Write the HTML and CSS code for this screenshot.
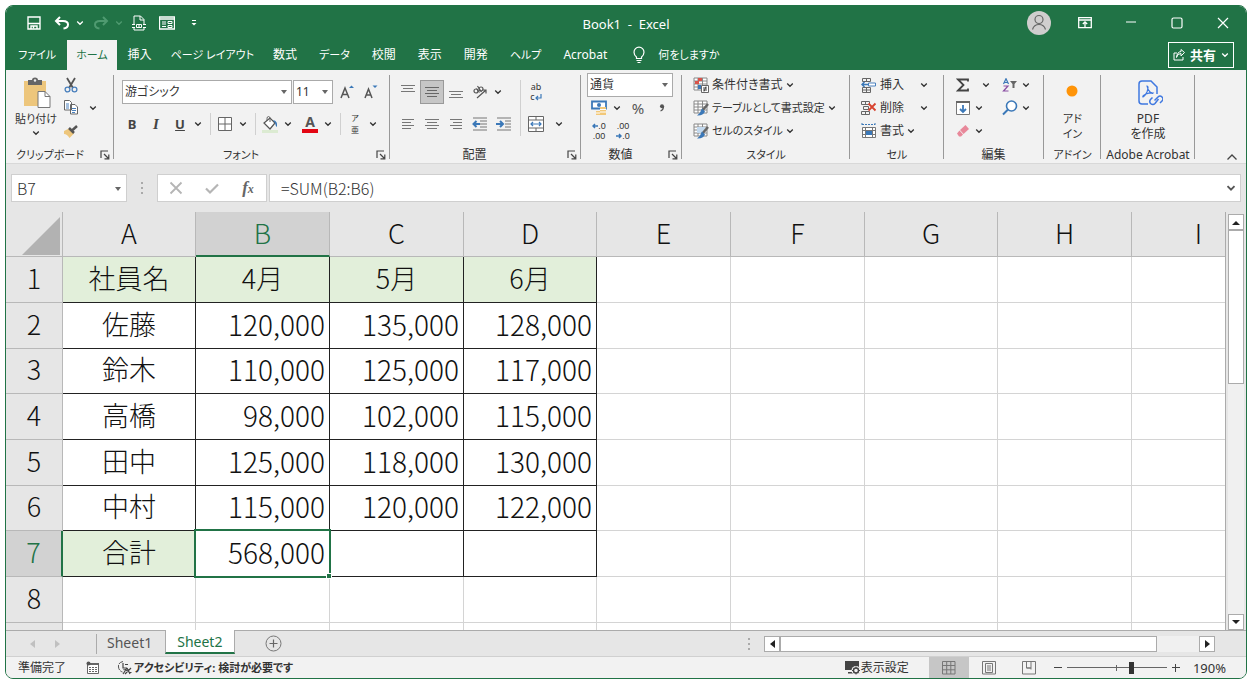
FILE: index.html
```html
<!DOCTYPE html>
<html lang="ja">
<head>
    <meta charset="UTF-8">
    <meta name="viewport" content="width=device-width, initial-scale=1.0">
    <title>Book1 - Excel</title>
    <link rel="stylesheet" href="styles.css">
</head>
<body>
    <!-- 共通アイコン -->
    <svg class="defs" width="0" height="0" aria-hidden="true">
        <symbol id="chev" viewBox="0 0 8 8"><path d="M1.2 2.5 4 5.3 6.8 2.5" fill="none" stroke="currentColor" stroke-width="1.3"/></symbol>
        <symbol id="launch" viewBox="0 0 10 10"><path d="M1 8V1h7M4 4l4 4M8.8 4.5V8.800H4.500" fill="none" stroke="#444" stroke-width="1.2"/></symbol>
        <symbol id="table" viewBox="0 0 16 16"><path d="M1 1h13v12H1zM1 4h13M1 7h13M1 10h13M5 1v12M9.500 1v12" fill="#fff" stroke="#888"/></symbol>
        <symbol id="pen" viewBox="0 0 16 16"><path d="M15 4 9 11" stroke="#666" stroke-width="2.500"/><path d="M9 8.500 12 11.500Q10 16 4 15.500 7.500 13 9 8.500z" fill="#3b78b8"/></symbol>
    </svg>

    <div class="window">
        <header class="titlebar">
            <div class="quick">
                <button class="icon-btn" aria-label="上書き保存"><svg width="14" height="14" viewBox="0 0 14 14"><path d="M1 1h12v12H1z" fill="none" stroke="#fff" stroke-width="1.4"/><path d="M1 7.500h12M4 13V10h6v3M6.500 10.500v2" fill="none" stroke="#fff" stroke-width="1.4"/></svg></button>
                <button class="icon-btn undo" aria-label="元に戻す"><svg width="16" height="14" viewBox="0 0 16 14"><path d="M6 1 2 5l4 4M2 5h7q5 0 5 3.500T9.500 12.500" fill="none" stroke="#fff" stroke-width="2"/></svg></button>
                <button class="chev-btn" aria-label="元に戻す一覧"><svg width="8" height="8"><use href="#chev"/></svg></button>
                <button class="icon-btn redo" aria-label="やり直し"><svg width="16" height="14" viewBox="0 0 16 14"><path d="M10 1l4 4-4 4M14 5H7q-5 0-5 3.500t4.500 4" fill="none" stroke="#4f9a70" stroke-width="2"/></svg></button>
                <button class="chev-btn dim" aria-label="やり直し一覧"><svg width="8" height="8"><use href="#chev"/></svg></button>
                <button class="icon-btn print" aria-label="印刷プレビュー"><svg width="14" height="16" viewBox="0 0 14 16"><path d="M2 9V1h6.500L12 4.500V9M8 1v4h4M2 13v2h10v-2" fill="none" stroke="#fff"/><path d="M0 9.500h3M11 9.500h3M0 12.500h3M11 12.500h3" stroke="#fff"/><path d="M4.500 9.500h5v3h-5zM7 9.500v3" fill="none" stroke="#fff"/></svg></button>
                <button class="icon-btn form" aria-label="フォーム"><svg width="16" height="14" viewBox="0 0 16 14"><path d="M.5 1h15v12H.5zM.5 3h15" fill="none" stroke="#fff" stroke-width="1.3"/><path d="M3 6h4M3 8h4M3 10.500h4" stroke="#fff"/><path d="M9 5.500h4v2H9zM9 9.500h4v2H9z" fill="none" stroke="#fff"/></svg></button>
                <button class="chev-btn qat" aria-label="クイックアクセスのカスタマイズ"><svg width="8" height="8" viewBox="0 0 8 8"><path d="M2 1.500h4" stroke="#fff"/><path d="M1.500 4h5L4 6.500z" fill="#fff"/></svg></button>
            </div>
            <div class="title">Book1&nbsp; -&nbsp; Excel</div>
            <div class="controls">
                <button class="avatar" aria-label="アカウント"><svg width="24" height="24" viewBox="0 0 24 24"><circle cx="12" cy="12" r="12" fill="#d0cece"/><circle cx="12" cy="8.500" r="4" fill="none" stroke="#666" stroke-width="1.200"/><path d="M5.500 18.500Q7 13.500 12 13.500t6.500 5" fill="none" stroke="#666" stroke-width="1.200"/></svg></button>
                <button aria-label="リボンの表示オプション"><svg width="14" height="12" viewBox="0 0 14 12"><path d="M.7.700h12.600v10H.7zM.7 3h12.600M7 10V5M4.800 7 7 4.800 9.200 7" fill="none" stroke="#fff" stroke-width="1.300"/></svg></button>
                <button aria-label="最小化"><svg width="12" height="12" viewBox="0 0 12 12"><path d="M1 5h10" stroke="#fff" stroke-width="1.200"/></svg></button>
                <button aria-label="最大化"><svg width="12" height="12" viewBox="0 0 12 12"><rect x="1" y="1" width="10" height="10" rx="1.500" fill="none" stroke="#fff" stroke-width="1.200"/></svg></button>
                <button aria-label="閉じる"><svg width="12" height="12" viewBox="0 0 12 12"><path d="m1 1 10 10M11 1 1 11" stroke="#fff" stroke-width="1.200"/></svg></button>
            </div>
        </header>

        <nav class="tabs">
            <button class="tab kana">ファイル</button>
            <button class="tab kana active">ホーム</button>
            <button class="tab">挿入</button>
            <button class="tab kana long">ページ レイアウト</button>
            <button class="tab">数式</button>
            <button class="tab kana">データ</button>
            <button class="tab">校閲</button>
            <button class="tab">表示</button>
            <button class="tab">開発</button>
            <button class="tab kana">ヘルプ</button>
            <button class="tab">Acrobat</button>
            <button class="tab tell kana"><svg width="14" height="18" viewBox="0 0 14 18"><path d="M4.500 12.500V11Q2 9 2 6.200a5 5 0 0 1 10 0Q12 9 9.500 11v1.500zM4.500 14.500h5M5.500 16.500h3" fill="none" stroke="#fff" stroke-width="1.200"/></svg>何をしますか</button>
            <button class="share"><svg width="12" height="12" viewBox="0 0 12 12"><path d="M4 4H1v7h9V8M3.500 8.500Q4 4.500 8 4.500V7l3.500-3.500L8 .500v2q-4 .5-4.500 6z" fill="none" stroke="#fff"/></svg>共有<svg width="8" height="8"><use href="#chev"/></svg></button>
        </nav>

        <div class="ribbon">
            <section class="group g-clip">
                <div class="body">
                    <button class="big paste kana">
                        <svg width="30" height="34" viewBox="0 0 30 34"><path d="M3 4h22v25H3z" fill="#edc67c"/><path d="M7 8V3h4q0-2.500 3-2.500T17 3h4v5z" fill="#666"/><circle cx="14" cy="3.500" r="1.200" fill="#eee"/><path d="M17 14.500h7l5 5V30.500H17z" fill="#fff" stroke="#777"/><path d="M24 14.500v5h5" fill="none" stroke="#777"/></svg>
                        <span>貼り付け</span>
                        <svg width="8" height="8"><use href="#chev"/></svg>
                    </button>
                    <div class="stack">
                        <div class="row"><button class="icon-btn" aria-label="切り取り"><svg width="14" height="16" viewBox="0 0 14 16"><path d="M3 1l6 10M11 1 5 11" stroke="#555" stroke-width="1.800"/><circle cx="3.500" cy="12.500" r="2.400" fill="none" stroke="#4a80bd" stroke-width="1.300"/><circle cx="10.500" cy="12.500" r="2.400" fill="none" stroke="#4a80bd" stroke-width="1.300"/></svg></button></div>
                        <div class="row"><button class="icon-btn" aria-label="コピー"><svg width="14" height="15" viewBox="0 0 14 15"><path d="M.5.500h5l2 2V10h-7zM6.500 4.500h4.500l2.500 2.500v7h-7z" fill="#fff" stroke="#666"/><path d="M2 4h3M2 6h3M2 8h3M8 8.500h4M8 10.500h4M8 12.500h3" stroke="#4a80bd"/></svg></button><button class="chev-btn copy-more" aria-label="コピーのオプション"><svg width="8" height="8"><use href="#chev"/></svg></button></div>
                        <div class="row"><button class="icon-btn" aria-label="書式のコピー"><svg width="14" height="14" viewBox="0 0 14 14"><path d="m0 7 5-2.500 5 5-4.500 4.500Q3 10 0 10z" fill="#edc67c"/><path d="m5 4 5 5M8 6.500 13 2" stroke="#555" stroke-width="2.500"/></svg></button></div>
                    </div>
                </div>
                <footer><span class="kana">クリップボード</span><button class="launcher" aria-label="クリップボードの設定"><svg width="10" height="10"><use href="#launch"/></svg></button></footer>
            </section>

            <section class="group g-font">
                <div class="body two">
                    <div class="row fields">
                        <span class="drop font-name"><select aria-label="フォント"><option>游ゴシック</option></select></span>
                        <span class="drop font-size"><select aria-label="フォント サイズ"><option>11</option></select></span>
                        <button class="icon-btn grow" aria-label="拡大"><svg width="14" height="14" viewBox="0 0 14 14"><path d="m1 13 4-10 4 10M2.500 9.500h5" fill="none" stroke="#555" stroke-width="1.500"/><path d="m9 3 2.500-2.500L14 3z" fill="#3b78b8"/></svg></button>
                        <button class="icon-btn" aria-label="縮小"><svg width="14" height="14" viewBox="0 0 14 14"><path d="m1 13 3.500-9L8 13M2.500 10h4" fill="none" stroke="#555" stroke-width="1.500"/><path d="M8.500.500 11 3l2.500-2.500z" fill="#3b78b8"/></svg></button>
                    </div>
                    <div class="row">
                        <button class="icon-btn letter"><b>B</b></button>
                        <button class="icon-btn letter italic"><i>I</i></button>
                        <button class="icon-btn letter"><u>U</u></button>
                        <button class="chev-btn" aria-label="下線の種類"><svg width="8" height="8"><use href="#chev"/></svg></button>
                        <i class="sep"></i>
                        <button class="icon-btn" aria-label="罫線"><svg width="14" height="14" viewBox="0 0 14 14"><path d="M.5.500h13v13H.5zM7 .500v13M.5 7h13" fill="#fff" stroke="#666"/></svg></button>
                        <button class="chev-btn" aria-label="罫線の種類"><svg width="8" height="8"><use href="#chev"/></svg></button>
                        <i class="sep"></i>
                        <button class="icon-btn" aria-label="塗りつぶし"><svg width="16" height="17" viewBox="0 0 16 17"><path d="m2 7 6-5 5 5-5 6z" fill="#fff" stroke="#555" stroke-width="1.200"/><path d="M5 5V2.500q0-2 1.500-2t1.500 2V6" fill="none" stroke="#666"/><path d="M11 4q5 1 4 7-1.500-1-2-4z" fill="#3b78b8"/><path d="M0 14h16v3H0z" fill="#dcebd2"/></svg></button>
                        <button class="chev-btn" aria-label="塗りつぶしの色"><svg width="8" height="8"><use href="#chev"/></svg></button>
                        <button class="icon-btn font-color" aria-label="フォントの色">A</button>
                        <button class="chev-btn" aria-label="フォントの色の選択"><svg width="8" height="8"><use href="#chev"/></svg></button>
                        <i class="sep"></i>
                        <button class="icon-btn ruby" aria-label="ふりがな"><span>ア</span><span>亜</span></button>
                        <button class="chev-btn" aria-label="ふりがなの設定"><svg width="8" height="8"><use href="#chev"/></svg></button>
                    </div>
                </div>
                <footer class="wide"><span class="kana">フォント</span><button class="launcher" aria-label="フォントの設定"><svg width="10" height="10"><use href="#launch"/></svg></button></footer>
            </section>

            <section class="group g-align">
                <div class="body">
                    <div class="two">
                        <div class="row">
                            <button class="icon-btn" aria-label="上揃え"><svg width="14" height="14" viewBox="0 0 14 14"><path d="M0 .500h14M2 3.500h10M0 6.500h14" stroke="#777"/></svg></button>
                            <button class="icon-btn pressed" aria-label="上下中央揃え"><svg width="14" height="14" viewBox="0 0 14 14"><path d="M0 2.500h14M2 5.500h10M0 8.500h14M2 11.500h10" stroke="#666"/></svg></button>
                            <button class="icon-btn" aria-label="下揃え"><svg width="14" height="14" viewBox="0 0 14 14"><path d="M0 6.500h14M2 9.500h10M0 12.500h14" stroke="#777"/></svg></button>
                            <button class="icon-btn" aria-label="方向"><svg width="16" height="16" viewBox="0 0 16 16"><g fill="none" stroke="#555" stroke-width="1.200"><circle cx="4" cy="7" r="2"/><path d="m4.500 4.500 3 4M5.500 2l4 6"/><circle cx="9" cy="5" r="2"/><path d="m5 14 9-8M10.500 6H14v3.500"/></g></svg></button>
                            <button class="chev-btn" aria-label="方向の選択"><svg width="8" height="8"><use href="#chev"/></svg></button>
                        </div>
                        <div class="row">
                            <button class="icon-btn" aria-label="左揃え"><svg width="12" height="12" viewBox="0 0 12 12"><path d="M0 1.500h12M0 4.500h9M0 7.500h12M0 10.500h9" stroke="#777"/></svg></button>
                            <button class="icon-btn" aria-label="中央揃え"><svg width="14" height="12" viewBox="0 0 14 12"><path d="M0 1.500h14M2 4.500h10M0 7.500h14M2 10.500h10" stroke="#777"/></svg></button>
                            <button class="icon-btn" aria-label="右揃え"><svg width="12" height="12" viewBox="0 0 12 12"><path d="M0 1.500h12M3 4.500h9M0 7.500h12M3 10.500h9" stroke="#777"/></svg></button>
                            <button class="icon-btn" aria-label="インデントを減らす"><svg width="16" height="14" viewBox="0 0 16 14"><path d="M1 1h14M8 4h7M8 7h7M8 10h7M1 13h14" stroke="#777"/><path d="M8 7H2M4.500 4 1.500 7l3 3" fill="none" stroke="#3b78b8" stroke-width="2"/></svg></button>
                            <button class="icon-btn" aria-label="インデントを増やす"><svg width="16" height="14" viewBox="0 0 16 14"><path d="M1 1h14M9 4h6M9 7h6M9 10h6M1 13h14" stroke="#777"/><path d="M0 7h6M4 4l3 3-3 3" fill="none" stroke="#3b78b8" stroke-width="2"/></svg></button>
                        </div>
                    </div>
                    <i class="sep tall"></i>
                    <div class="two">
                        <div class="row"><button class="icon-btn wrap-text" aria-label="折り返して全体を表示する"><span>ab</span><span>c<svg width="7" height="7" viewBox="0 0 7 7"><path d="M6 0v4H1M3 2 1 4l2 2" fill="none" stroke="#3b78b8" stroke-width="1.200"/></svg></span></button></div>
                        <div class="row"><button class="icon-btn" aria-label="セルを結合して中央揃え"><svg width="16" height="16" viewBox="0 0 16 16"><path d="M.5.500h15v15H.5zM.5 4h15M.5 12h15M8 .500V4M8 12v3.500" fill="#fff" stroke="#666"/><path d="M3 8h10M5 6 3 8l2 2M11 6l2 2-2 2" fill="none" stroke="#3b78b8" stroke-width="1.200"/></svg></button><button class="chev-btn merge-more" aria-label="結合の種類"><svg width="8" height="8"><use href="#chev"/></svg></button></div>
                    </div>
                </div>
                <footer class="wide"><span>配置</span><button class="launcher" aria-label="配置の設定"><svg width="10" height="10"><use href="#launch"/></svg></button></footer>
            </section>

            <section class="group g-number">
                <div class="body stack">
                    <div class="row"><span class="drop number-format"><select aria-label="表示形式"><option>通貨</option></select></span></div>
                    <div class="row">
                        <button class="icon-btn" aria-label="通貨表示形式"><svg width="16" height="16" viewBox="0 0 16 16"><path d="M1 1.500h14v7H1z" fill="#fff" stroke="#3b78b8" stroke-width="1.800"/><circle cx="8" cy="5" r="2" fill="#3b78b8"/><path d="M9 7h6v8H9zM5 11h5v4H5z" fill="#f2c879"/><path d="M9 9.500h6M9 12h6M5 13h4" stroke="#fff"/></svg></button>
                        <button class="chev-btn" aria-label="通貨の選択"><svg width="8" height="8"><use href="#chev"/></svg></button>
                        <button class="icon-btn percent">%</button>
                        <button class="icon-btn comma" aria-label="桁区切り"><svg width="6" height="8" viewBox="0 0 6 8"><circle cx="3" cy="2.300" r="2" fill="#555"/><path d="M4.500 2q0 4-3 5" fill="none" stroke="#555" stroke-width="1.300"/></svg></button>
                    </div>
                    <div class="row">
                        <button class="icon-btn decimals" aria-label="小数点以下の桁数を増やす"><span><svg width="6" height="6" viewBox="0 0 6 6"><path d="M6 3H1M3 1 1 3l2 2" fill="none" stroke="#3b78b8" stroke-width="1.500"/></svg>.0</span><span>.00</span></button>
                        <button class="icon-btn decimals" aria-label="小数点以下の桁数を減らす"><span>.00</span><span><svg width="6" height="6" viewBox="0 0 6 6"><path d="M0 3h5M3 1l2 2-2 2" fill="none" stroke="#3b78b8" stroke-width="1.500"/></svg>.0</span></button>
                    </div>
                </div>
                <footer class="wide"><span>数値</span><button class="launcher" aria-label="数値の設定"><svg width="10" height="10"><use href="#launch"/></svg></button></footer>
            </section>

            <section class="group g-style">
                <div class="body stack">
                    <button class="row cmd"><svg width="16" height="16"><use href="#table"/><path d="M5 1h4v3H5zM2 4h4v3H2z" fill="#d9534a"/><path d="M5 8h3v4H5z" fill="#3b78b8"/><path d="M8.500 8.500h7v7h-7z" fill="#fff" stroke="#666"/><path d="M10 11h4M10 13h4M13 9.500l-2 5" stroke="#444"/></svg><span>条件付き書式</span><svg width="8" height="8"><use href="#chev"/></svg></button>
                    <button class="row cmd kana"><svg width="16" height="16"><use href="#table"/><use href="#pen"/></svg><span>テーブルとして書式設定</span><svg width="8" height="8"><use href="#chev"/></svg></button>
                    <button class="row cmd kana"><svg width="16" height="16"><use href="#table"/><path d="M4 4h8v6H4z" fill="#c3d9ee"/><use href="#pen"/></svg><span>セルのスタイル</span><svg width="8" height="8"><use href="#chev"/></svg></button>
                </div>
                <footer><span class="kana">スタイル</span></footer>
            </section>

            <section class="group g-cells">
                <div class="body stack">
                    <button class="row cmd spread"><svg width="16" height="16" viewBox="0 0 16 16"><path d="M1.500 1.500h8v3h-8zM5.500 1.500v3M1.500 10.500h8v5h-8zM5.500 10.500v5M1.500 13h8" fill="none" stroke="#666"/><path d="M7.500 6h7v3h-7z" fill="#fff" stroke="#4a80bd"/><path d="M7 7.500H1M3.500 5 1 7.500 3.500 10" fill="none" stroke="#3b78b8" stroke-width="1.500"/></svg><span>挿入</span><svg width="8" height="8"><use href="#chev"/></svg></button>
                    <button class="row cmd spread"><svg width="16" height="16" viewBox="0 0 16 16"><path d="M.5 1.500h8v3h-8zM4.500 1.500v3M2.500 6.500h5v3h-5zM.5 11.500h8v3h-8zM4.500 11.500v3" fill="none" stroke="#666"/><path d="m7.500 3.500 7 7M14.500 3.500l-7 7" stroke="#d8432f" stroke-width="1.800"/></svg><span>削除</span><svg width="8" height="8"><use href="#chev"/></svg></button>
                    <button class="row cmd"><svg width="16" height="16" viewBox="0 0 16 16"><path d="M1 1.500h13M1 0v3M14 0v3" stroke="#3b78b8" stroke-dasharray="2 1"/><path d="M1.500 4.500h13v10h-13zM4.500 4.500v10M11.500 4.500v10M1.500 7.500h13M1.500 11.500h13" fill="#fff" stroke="#777"/><path d="M5 8h6v4H5z" fill="#3b78b8"/></svg><span>書式</span><svg width="8" height="8"><use href="#chev"/></svg></button>
                </div>
                <footer><span class="kana">セル</span></footer>
            </section>

            <section class="group g-edit">
                <div class="body">
                    <div class="stack">
                        <div class="row"><button class="icon-btn" aria-label="合計"><svg width="14" height="14" viewBox="0 0 14 14"><path d="M12 3.500V1.500H2L7.500 7 2 12.500h10v-2" fill="none" stroke="#444" stroke-width="1.800"/></svg></button><button class="chev-btn sum-more" aria-label="合計の種類"><svg width="8" height="8"><use href="#chev"/></svg></button></div>
                        <div class="row"><button class="icon-btn" aria-label="フィル"><svg width="14" height="14" viewBox="0 0 14 14"><path d="M.5.500h13v13H.5z" fill="#fff" stroke="#777"/><path d="M0 1h14" stroke="#666" stroke-width="2"/><path d="M7 4v7M4 8l3 3 3-3" fill="none" stroke="#3b78b8" stroke-width="1.800"/></svg></button><button class="chev-btn tight" aria-label="フィルの方向"><svg width="8" height="8"><use href="#chev"/></svg></button></div>
                        <div class="row"><button class="icon-btn" aria-label="クリア"><svg width="14" height="14" viewBox="0 0 14 14"><path d="m4 6 5.500-5L13 5 7.500 10z" fill="#e8889a"/><path d="M3.500 6.500 7 10.500 5 12.500H3L1 9.500z" fill="#e8889a"/></svg></button><button class="chev-btn tight" aria-label="クリアの種類"><svg width="8" height="8"><use href="#chev"/></svg></button></div>
                    </div>
                    <div class="stack">
                        <div class="row"><button class="icon-btn" aria-label="並べ替えとフィルター"><svg width="16" height="14" viewBox="0 0 16 14"><path d="M1.500 6 4 .700 6.500 6M2.500 4.500h3" fill="none" stroke="#3b78b8" stroke-width="1.200"/><path d="M1.500 8h4.500l-4.500 5H6.500" fill="none" stroke="#8a4fa3" stroke-width="1.200"/><path d="M8 3h7l-2.500 3v4h-2V6z" fill="#666"/></svg></button><button class="chev-btn tight" aria-label="並べ替えの種類"><svg width="8" height="8"><use href="#chev"/></svg></button></div>
                        <div class="row"><button class="icon-btn" aria-label="検索と選択"><svg width="16" height="16" viewBox="0 0 16 16"><circle cx="9.500" cy="6" r="5" fill="#fff" stroke="#3b78b8" stroke-width="1.600"/><path d="m6 9.500-5 5" stroke="#3b78b8" stroke-width="2"/></svg></button><button class="chev-btn tight" aria-label="検索の種類"><svg width="8" height="8"><use href="#chev"/></svg></button></div>
                    </div>
                </div>
                <footer class="edit"><span>編集</span></footer>
            </section>

            <section class="group g-addin">
                <div class="body"><button class="big"><svg width="30" height="34" viewBox="0 0 30 34"><circle cx="14" cy="14" r="5.500" fill="#ff9408"/></svg><span class="kana">アド</span><span class="kana">イン</span></button></div>
                <footer><span class="kana">アドイン</span></footer>
            </section>

            <section class="group g-acrobat">
                <div class="body"><button class="big"><svg width="30" height="34" viewBox="0 0 30 34"><g fill="none" stroke="#3f78e0" stroke-width="1.500"><path d="M15 27H9q-3 0-3-3V7q0-3 3-3h9l6 6v7"/><path d="M14 9q2 0 0 6-2 4-4 5-1-1 3-3 4-1.500 7-1-1 1-3-1-2.500-2.500-3-6z" stroke-width="1.200"/><path d="M21.500 23.500 25 20q2-2 4 0t0 4l-2 2M25.500 22 22 26.500q-2 2-4.500 0-1.500-2 0-4l2-2"/></g></svg><span>PDF</span><span>を作成</span></button></div>
                <footer><span>Adobe Acrobat</span></footer>
            </section>

            <button class="collapse" aria-label="リボンを折りたたむ"><svg width="12" height="8" viewBox="0 0 12 8"><path d="M1.500 6.500 6 2l4.500 4.500" fill="none" stroke="#444" stroke-width="1.300"/></svg></button>
        </div>

        <div class="formula-bar">
            <div class="name-box"><input type="text" value="B7" aria-label="名前ボックス"><span class="arrow"></span></div>
            <svg class="grip" width="4" height="14" viewBox="0 0 4 14"><path d="M1 1h2v2H1zM1 6h2v2H1zM1 11h2v2H1z" fill="#aaa"/></svg>
            <div class="fx-box">
                <button aria-label="キャンセル"><svg width="14" height="14" viewBox="0 0 14 14"><path d="m1.500 1.500 11 11M12.500 1.500l-11 11" stroke="#b5b5b5" stroke-width="1.800"/></svg></button>
                <button aria-label="入力"><svg width="14" height="14" viewBox="0 0 14 14"><path d="m1 7.500 4 4 8-8" fill="none" stroke="#b5b5b5" stroke-width="2.200"/></svg></button>
                <button class="fx" aria-label="関数の挿入"><i>f<small>x</small></i></button>
            </div>
            <div class="formula"><input type="text" value="=SUM(B2:B6)" aria-label="数式バー"><button aria-label="数式バーの展開"><svg width="10" height="10" viewBox="0 0 8 8"><path d="M1.200 2.500 4 5.300 6.800 2.500" fill="none" stroke="#555" stroke-width="1.500"/></svg></button></div>
        </div>

        <main class="workspace">
            <div class="sheet">
                <table>
                    <colgroup class="head-col"><col></colgroup>
                    <colgroup class="cell-cols"><col><col><col><col><col><col><col><col><col></colgroup>
                    <thead>
                        <tr><th class="corner"><svg width="38" height="38" viewBox="0 0 38 38"><path d="M38 0v38H0z" fill="#b2b2b2"/></svg></th><th>A</th><th class="sel">B</th><th>C</th><th>D</th><th>E</th><th>F</th><th>G</th><th>H</th><th>I</th></tr>
                    </thead>
                    <tbody>
                        <tr class="heading"><th>1</th><td>社員名</td><td>4月</td><td>5月</td><td>6月</td><td></td><td></td><td></td><td></td><td></td></tr>
                        <tr class="data"><th>2</th><td>佐藤</td><td>120,000</td><td>135,000</td><td>128,000</td><td></td><td></td><td></td><td></td><td></td></tr>
                        <tr class="data"><th>3</th><td>鈴木</td><td>110,000</td><td>125,000</td><td>117,000</td><td></td><td></td><td></td><td></td><td></td></tr>
                        <tr class="data"><th>4</th><td>高橋</td><td>98,000</td><td>102,000</td><td>115,000</td><td></td><td></td><td></td><td></td><td></td></tr>
                        <tr class="data"><th>5</th><td>田中</td><td>125,000</td><td>118,000</td><td>130,000</td><td></td><td></td><td></td><td></td><td></td></tr>
                        <tr class="data"><th>6</th><td>中村</td><td>115,000</td><td>120,000</td><td>122,000</td><td></td><td></td><td></td><td></td><td></td></tr>
                        <tr class="data total"><th class="sel">7</th><td>合計</td><td class="cursor">568,000</td><td></td><td></td><td></td><td></td><td></td><td></td><td></td></tr>
                        <tr><th>8</th><td></td><td></td><td></td><td></td><td></td><td></td><td></td><td></td><td></td></tr>
                        <tr><th></th><td></td><td></td><td></td><td></td><td></td><td></td><td></td><td></td><td></td></tr>
                    </tbody>
                </table>
            </div>
            <div class="vscroll">
                <button aria-label="上へ"><svg width="8" height="5" viewBox="0 0 8 5"><path d="m0 5 4-4 4 4z" fill="#222"/></svg></button>
                <div class="track"><div class="thumb"></div></div>
                <button aria-label="下へ"><svg width="8" height="5" viewBox="0 0 8 5"><path d="m0 0 4 4 4-4z" fill="#222"/></svg></button>
            </div>
        </main>

        <div class="sheet-bar">
            <div class="sheet-nav">
                <button aria-label="前のシート"><svg width="5" height="8" viewBox="0 0 5 8"><path d="M5 0v8L0 4z" fill="#c0c0c0"/></svg></button>
                <button aria-label="次のシート"><svg width="5" height="8" viewBox="0 0 5 8"><path d="M0 0v8l5-4z" fill="#c0c0c0"/></svg></button>
            </div>
            <button class="sheet-tab">Sheet1</button>
            <button class="sheet-tab active">Sheet2</button>
            <button class="add-sheet" aria-label="新しいシート"><svg width="17" height="17" viewBox="0 0 17 17"><circle cx="8.500" cy="8.500" r="7.500" fill="none" stroke="#777"/><path d="M8.500 4.500v8M4.500 8.500h8" stroke="#666" stroke-width="1.200"/></svg></button>
            <svg class="grip" width="4" height="14" viewBox="0 0 4 14"><path d="M1 1h2v2H1zM1 6h2v2H1zM1 11h2v2H1z" fill="#aaa"/></svg>
            <div class="hscroll">
                <button aria-label="左へ"><svg width="5" height="8" viewBox="0 0 5 8"><path d="M5 0v8L0 4z" fill="#222"/></svg></button>
                <div class="track"><div class="thumb"></div></div>
                <button aria-label="右へ"><svg width="5" height="8" viewBox="0 0 5 8"><path d="M0 0v8l5-4z" fill="#222"/></svg></button>
            </div>
        </div>

        <footer class="status">
            <span>準備完了</span>
            <svg class="macro" width="13" height="13" viewBox="0 0 13 13"><path d="M1.500 3.500h11v9h-11z" fill="#fff" stroke="#666"/><path d="M4 2h9v2H4z" fill="#666"/><path d="M3 6.500h8M3 8.500h8M3 10.500h8" stroke="#666" stroke-dasharray="2 1"/><circle cx="2.500" cy="2.500" r="2" fill="#555"/></svg>
            <button class="access"><svg width="16" height="16" viewBox="0 0 16 16"><path d="M6 1.500q-5 1-4.500 5.500.5 4 4 5" fill="none" stroke="#555" stroke-dasharray="5 1"/><path d="M6 3v5h4M8 4.500h3M10 8l-4 6M10 8l3 6M6.500 9.500l8 3M8 14l6-6" fill="none" stroke="#444" stroke-width="1.200"/></svg><b class="kana">アクセシビリティ: 検討が必要です</b></button>
            <button class="display"><svg width="17" height="15" viewBox="0 0 17 15"><path d="M1 1h14v9H1zM4 12h5v1.500H4z" fill="#444"/><circle cx="12" cy="10.500" r="4.500" fill="#f2f2f2"/><circle cx="12" cy="10.500" r="2.500" fill="none" stroke="#444" stroke-width="1.400"/><path d="M12 6.500v1.500M12 13v1.500M8 10.500h1.500M14.500 10.500H16M9.300 7.800l1 1M13.700 12.200l1 1M14.700 7.800l-1 1M10.300 12.200l-1 1" stroke="#444"/></svg>表示設定</button>
            <div class="views">
                <button class="on" aria-label="標準"><svg width="14" height="14" viewBox="0 0 14 14"><path d="M.5.500h12.500v12.500H.5zM.5 4.500H13M.5 8.800H13M4.700.500V13M8.800.500V13" fill="none" stroke="#777"/></svg></button>
                <button aria-label="ページ レイアウト"><svg width="14" height="14" viewBox="0 0 14 14"><path d="M.5.500h13v12.500H.5zM3.500 2.500h7v9h-7zM5 5h4M5 7h4M5 9h4" fill="none" stroke="#777"/></svg></button>
                <button aria-label="改ページ プレビュー"><svg width="14" height="14" viewBox="0 0 14 14"><path d="M.5.500h13v12.500H.5zM4.500.500V7H9M9 .500V8.500M4.500 7H9" fill="none" stroke="#777"/></svg></button>
            </div>
            <button class="zoom-btn" aria-label="縮小"><svg width="8" height="8" viewBox="0 0 8 8"><path d="M0 3.500h8" stroke="#444"/></svg></button>
            <input type="range" min="10" max="400" value="265" aria-label="ズーム">
            <button class="zoom-btn" aria-label="拡大"><svg width="8" height="8" viewBox="0 0 8 8"><path d="M0 3.500h8M3.500 0v8" stroke="#444"/></svg></button>
            <button class="zoom-value">190%</button>
        </footer>
    </div>
</body>
</html>
```
FILE: styles.css
```css
* {
    box-sizing: border-box;
}
body {
    margin: 0;
    padding: 5px 8px 7px 5px;
    height: 100vh;
    background: #fff;
    color: #333;
    font-family: "Noto Sans", "Noto Sans CJK JP", sans-serif;
    font-size: 12px;
    line-height: 16px;
    font-feature-settings: "palt";
}
.defs {
    position: absolute;
}
button, input, select {
    font: inherit;
    font-feature-settings: inherit;
    color: inherit;
}
button {
    display: flex;
    align-items: center;
    justify-content: center;
    padding: 0;
    border: none;
    background: none;
    white-space: nowrap;
}
svg {
    display: block;
    flex: none;
}
.kana {
    font-size: 11px;
}
.window {
    display: flex;
    flex-direction: column;
    height: 100%;
    border: 1px solid #217346;
    border-radius: 8px;
    overflow: hidden;
    background: #e6e6e6;
}

/* タイトルバー */
.titlebar {
    display: grid;
    grid-template-columns: 1fr auto 1fr;
    align-items: center;
    height: 34px;
    background: #217346;
    color: #fff;
}
.quick {
    display: flex;
    align-items: center;
    height: 32px;
    padding-left: 16px;
}
.icon-btn {
    width: 24px;
    height: 24px;
    flex: none;
}
.chev-btn {
    width: 12px;
    height: 24px;
    flex: none;
}
.quick .undo {
    margin-left: 4px;
}
.quick .redo {
    margin-left: 3px;
}
.quick .print {
    margin-left: 2px;
}
.quick .form {
    margin-left: 4px;
}
.quick .qat {
    margin-left: 9px;
}
.dim {
    color: #4f9a70;
}
.title {
    padding-top: 2px;
    font-size: 13px;
}
.controls {
    display: flex;
    justify-content: flex-end;
}
.controls button {
    width: 46px;
    height: 32px;
}

/* タブ */
.tabs {
    display: flex;
    align-items: stretch;
    height: 30px;
    padding-left: 1px;
    background: #217346;
    color: #fff;
}
.tab {
    padding: 0 11px;
}
.tab.active {
    padding: 0 9px;
    background: #f2f2f2;
    color: #217346;
}
.tab.long {
    padding: 0 8px;
}
.tell {
    gap: 12px;
    margin-left: 3px;
}
.share {
    gap: 5px;
    height: 26px;
    margin: 2px 12px 0 auto;
    padding: 0 4px;
    border: 1px solid #fff;
    font-size: 13px;
    font-weight: bold;
}

/* リボン */
.ribbon {
    display: flex;
    height: 94px;
    padding-top: 3px;
    border-bottom: 1px solid #d8d8d8;
    background: #f2f2f2;
}
.group {
    position: relative;
    display: flex;
    flex-direction: column;
    flex: none;
}
.group::after {
    content: "";
    position: absolute;
    top: 2px;
    right: 0;
    bottom: 4px;
    width: 1px;
    background: #999;
}
.group > footer {
    display: flex;
    align-items: center;
    justify-content: center;
    height: 20px;
    padding-top: 4px;
    position: relative;
    white-space: nowrap;
}
.group > .wide {
    padding-right: 28px;
}
.group > .edit {
    padding-right: 8px;
}
.launcher {
    position: absolute;
    right: 4px;
    top: 7px;
}
.body {
    display: flex;
    height: 71px;
}
.stack, .body.stack {
    display: flex;
    flex-direction: column;
}
.row {
    display: flex;
    align-items: center;
    height: 23px;
}
.two {
    display: flex;
    flex-direction: column;
    gap: 8px;
    padding-top: 7px;
}
.two .row {
    height: 24px;
}
.sep {
    width: 1px;
    height: 22px;
    margin: 0 2px 0 6px;
    background: #d0d0d0;
}
.sep.tall {
    height: 56px;
    margin: 7px 3px 0 4px;
}
.big {
    flex-direction: column;
    justify-content: flex-start;
    padding-top: 4px;
    line-height: 15px;
}
.g-clip { width: 108px; }
.g-font { width: 276px; padding-left: 6px; }
.g-align { width: 191px; padding-left: 6px; }
.g-number { width: 101px; padding-left: 6px; }
.g-style { width: 168px; }
.g-cells { width: 94px; }
.g-edit { width: 100px; padding-left: 7px; }
.g-addin { width: 57px; }
.g-acrobat { width: 94px; }
.g-addin .body, .g-acrobat .body {
    justify-content: center;
}
.g-clip > footer {
    padding-right: 20px;
}
.paste {
    width: 46px;
    margin-left: 7px;
}
.paste > svg:last-child {
    margin-top: 3px;
}
.copy-more {
    margin-left: 4px;
}
.fields {
    padding-left: 2px;
}
.drop {
    position: relative;
    display: block;
    height: 24px;
}
.drop select {
    width: 100%;
    height: 100%;
    padding: 0 2px;
    border: 1px solid #aaa;
    border-radius: 0;
    background: #fff;
    appearance: none;
}
.drop::after, .arrow {
    content: "";
    position: absolute;
    top: 10px;
    right: 5px;
    border: 3px solid transparent;
    border-top: 4px solid #666;
    border-bottom: none;
    pointer-events: none;
}
.font-name {
    width: 170px;
    margin-right: 1px;
}
.font-size {
    width: 40px;
}
.grow {
    margin-left: 2px;
}
.number-format {
    width: 86px;
}
.letter {
    font-size: 13px;
    color: #444;
}
.letter u {
    font-weight: bold;
}
.italic {
    font-family: "Liberation Serif", serif;
    font-size: 15px;
    font-weight: bold;
}
.font-color {
    width: 16px;
    height: 18px;
    margin: 0 4px 0 8px;
    border-bottom: 4px solid #e30613;
    font-size: 14px;
    font-weight: bold;
    line-height: 14px;
    color: #555;
}
.ruby, .wrap-text, .decimals {
    flex-direction: column;
    font-size: 9px;
    line-height: 10px;
}
.decimals {
    font-family: "Liberation Sans", sans-serif;
}
.ruby {
    font-size: 8px;
    line-height: 12px;
}
.wrap-text span, .decimals span {
    display: flex;
    align-items: center;
}
.percent {
    margin-left: 3px;
    font-size: 15px;
    color: #555;
}
.pressed {
    border: 1px solid #999;
    background: #c6c6c6;
}
.merge-more {
    margin-left: 5px;
}
.cmd {
    justify-content: flex-start;
    gap: 3px;
    margin-left: 11px;
}
.spread svg:last-child {
    margin-left: 13px;
}
.sum-more {
    margin-left: 5px;
}
.tight {
    margin-left: -2px;
}
.g-edit .stack:first-child {
    width: 47px;
}
.collapse {
    align-self: flex-end;
    margin: 0 8px 2px auto;
}

/* 数式バー */
.formula-bar {
    display: flex;
    align-items: center;
    height: 48px;
    padding: 0 5px;
}
.name-box, .fx-box, .formula {
    position: relative;
    display: flex;
    height: 28px;
    border: 1px solid #cfcfcf;
    background: #fff;
}
.formula-bar input {
    width: 100%;
    min-width: 0;
    padding: 0 0 0 5px;
    border: none;
    background: none;
    font-family: "Noto Sans CJK JP", sans-serif;
    font-size: 16px;
    font-weight: 300;
}
.name-box {
    width: 116px;
}
.arrow {
    top: 12px;
}
.formula-bar .grip {
    margin: 0 13px;
}
.fx-box {
    width: 110px;
}
.fx-box button {
    width: 36px;
}
.fx {
    font-family: "Liberation Serif", serif;
    font-size: 17px;
    font-weight: bold;
    color: #666;
}
.fx small {
    font-size: 12px;
}
.formula {
    flex: 1;
    margin-left: 2px;
}
.formula input {
    padding-left: 11px;
}
.formula button {
    width: 18px;
}

/* シート */
.workspace {
    display: flex;
    flex: 1;
    min-height: 0;
}
.sheet {
    flex: 1;
    min-width: 0;
    overflow: hidden;
    border-right: 1px solid #ababab;
    background: #fff;
}
.sheet table {
    width: 1260px;
    table-layout: fixed;
    border-collapse: separate;
    border-spacing: 0;
    font-family: "Noto Sans CJK JP", sans-serif;
    font-size: 27px;
    font-weight: 300;
    line-height: 38px;
    font-feature-settings: normal;
    color: #111;
}
.head-col col {
    width: 57px;
}
.cell-cols col {
    width: 134px;
}
.cell-cols col:nth-child(3n+1) {
    width: 133px;
}
.sheet th, .sheet td {
    height: 46px;
    padding: 0 0 4px;
    border-right: 1px solid #d4d4d4;
    border-bottom: 1px solid #d4d4d4;
    text-align: center;
}
.sheet tr:nth-child(3n) > * {
    height: 45px;
}
.sheet th {
    border-color: #b8b8b8;
    background: #e6e6e6;
    font-weight: 300;
}
.sheet thead th {
    height: 45px;
    padding-bottom: 2px;
}
.sheet .corner {
    padding: 3px 2px 0 0;
}
.corner svg {
    margin-left: auto;
}
.sheet th.sel {
    background: #d2d2d2;
    color: #217346;
}
.sheet thead th.sel {
    border-bottom: 2px solid #217346;
}
.sheet tbody th.sel {
    border-right: 2px solid #217346;
}
.heading td:nth-child(-n+5), .data td:nth-child(-n+5) {
    border-color: #222;
}
.heading td:nth-child(-n+5), .total td:nth-child(2) {
    background: #e2efda;
}
.data td:nth-child(n+3) {
    padding-right: 4px;
    font-size: 28px;
    text-align: right;
}
.sheet .cursor {
    position: relative;
}
.cursor::before {
    content: "";
    position: absolute;
    inset: -2px;
    border: 2px solid #217346;
}
.cursor::after {
    content: "";
    position: absolute;
    right: -3px;
    bottom: -3px;
    width: 4px;
    height: 4px;
    border: 1px solid #fff;
    background: #217346;
    box-sizing: content-box;
}

/* スクロールバー */
.vscroll {
    display: flex;
    flex-direction: column;
    width: 20px;
    padding: 2px 2px 0 2px;
}
.vscroll button, .hscroll button {
    width: 16px;
    height: 16px;
    border: 1px solid #ababab;
    background: #fff;
}
.track {
    flex: 1;
    background: #f0f0f0;
}
.thumb {
    border: 1px solid #ababab;
    background: #fff;
}
.vscroll .thumb {
    height: 40%;
}
.sheet-bar {
    display: flex;
    align-items: center;
    height: 26px;
    border-top: 1px solid #ababab;
}
.sheet-nav {
    display: flex;
    gap: 20px;
    width: 91px;
    height: 20px;
    padding-left: 24px;
    border-right: 1px solid #ababab;
}
.sheet-tab {
    align-self: stretch;
    padding: 0 13px 2px 10px;
    font-size: 14px;
    color: #555;
}
.sheet-tab.active {
    margin: -1px 0 2px;
    padding: 2px 12px 0 11px;
    border-right: 1px solid #ababab;
    border-bottom: 2px solid #217346;
    border-left: 1px solid #ababab;
    background: #fff;
    color: #217346;
}
.add-sheet {
    margin-left: 30px;
}
.sheet-bar .grip {
    margin-left: auto;
}
.hscroll {
    display: flex;
    width: 451px;
    margin: 0 31px 0 13px;
}
.hscroll .thumb {
    width: 90%;
    height: 16px;
}

/* ステータスバー */
.status {
    display: flex;
    align-items: center;
    height: 22px;
    padding: 0 20px 0 12px;
    border-top: 1px solid #d0d0d0;
    background: #f2f2f2;
}
.macro {
    margin: 0 18px 0 20px;
}
.access {
    gap: 1px;
}
.display {
    margin-left: auto;
    margin-right: 20px;
}
.views {
    display: flex;
    align-self: stretch;
}
.views button {
    width: 40px;
}
.views .on {
    background: #c6c6c6;
}
.zoom-btn {
    margin: 0 5px;
}
.status input {
    width: 100px;
    height: 12px;
    margin: 0;
    appearance: none;
    background: linear-gradient(#666, #666) center / 100% 1px no-repeat, linear-gradient(#666, #666) 50% 50% / 1px 6px no-repeat;
}
.status input::-webkit-slider-thumb {
    appearance: none;
    width: 5px;
    height: 12px;
    background: #333;
}
.zoom-value {
    margin-left: 8px;
    font-size: 13px;
}
```
